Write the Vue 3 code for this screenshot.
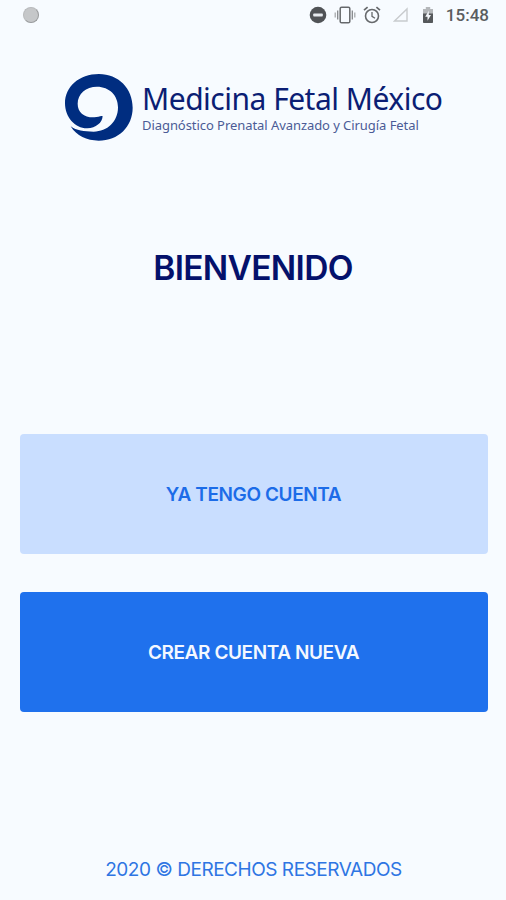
<template>
  <div class="screen">
    <header class="status-bar">
      <span class="dot"></span>
      <div class="status-icons">
        <svg class="icon-dnd" width="18" height="18" viewBox="0 0 18 18">
          <circle cx="9" cy="9" r="8.3" fill="#505356" />
          <rect x="4.2" y="7.4" width="9.6" height="3.2" rx="0.8" fill="#e6eaee" />
        </svg>
        <svg class="icon-vibrate" width="22" height="18" viewBox="0 0 22 18" fill="none" stroke="#66696c">
          <rect x="6.2" y="1.2" width="9.6" height="15.6" rx="1.4" stroke-width="1.5" />
          <path d="M3.7 4.5v9M18.3 4.5v9" stroke-width="1.3" stroke="#85888b" />
          <path d="M1.2 6.5v5M20.8 6.5v5" stroke-width="1.2" stroke="#a0a3a6" />
        </svg>
        <svg class="icon-alarm" width="18" height="18" viewBox="0 0 18 18" fill="none" stroke="#66696c">
          <circle cx="9" cy="10" r="6.5" stroke-width="1.6" />
          <path d="M9 6v4.3l3 1.9" stroke-width="1.3" />
          <path d="M1 4.2L4.6 1.1M17 4.2L13.4 1.1" stroke-width="1.7" />
        </svg>
        <svg class="icon-signal" width="16" height="16" viewBox="0 0 16 16">
          <path d="M1.5 14L14 2v12z" fill="none" stroke="#c8cbce" stroke-width="1.4" />
        </svg>
        <svg class="icon-battery" width="12" height="18" viewBox="0 0 12 18">
          <path d="M3.8 1h4.4v2H11v5H1V3h2.8z" fill="#b4b7ba" />
          <path d="M1 7.5h10v8.7q0 .8-.8.8H1.8q-.8 0-.8-.8z" fill="#55585b" />
          <path d="M6.8 4.7L3.2 10.8h2.3v4L9 8.9H6.8z" fill="#f3f6fa" />
        </svg>
      </div>
      <span class="time">15:48</span>
    </header>

    <div class="logo">
      <svg class="mark" width="70" height="70" viewBox="0 0 70 70">
        <path
          transform="translate(-8 -7) scale(0.33333)"
          fill="#002d80"
          d="M44 181C62 210 92 224 128 224C187 224 230 182 230 125C230 67 187 24 129 24C69 24 27 62 27 112C27 154 58 188 94 187C120 186 138 171 140 151C134 148 127 154 115 154C84 155 65 139 65 113C65 84 90 62 123 62C160 62 186 88 186 124C186 167 154 197 113 197C84 197 61 194 44 181Z"
        />
      </svg>
      <div class="wordmark">
        <div class="brand">Medicina Fetal México</div>
        <div class="tagline">Diagnóstico Prenatal Avanzado y Cirugía Fetal</div>
      </div>
    </div>

    <h1 class="title">BIENVENIDO</h1>

    <div class="actions">
      <button class="btn btn-light" type="button">YA TENGO CUENTA</button>
      <button class="btn btn-primary" type="button">CREAR CUENTA NUEVA</button>
    </div>

    <footer class="footer">2020 © DERECHOS RESERVADOS</footer>
  </div>
</template>

<script setup>
</script>

<style>
body {
  background: #f7fbff;
}
</style>

<style scoped>
.screen {
  box-sizing: border-box;
  display: flex;
  flex-direction: column;
  width: 506px;
  height: 900px;
  overflow: hidden;
  background: #f7fbff;
  font-family: Inter, "Liberation Sans", sans-serif;
}

.status-bar {
  display: flex;
  align-items: center;
  height: 30px;
  padding: 0 17px 0 23px;
}

.dot {
  box-sizing: border-box;
  width: 16px;
  height: 16px;
  border: 1px solid #b8babc;
  border-right-color: #989a9c;
  border-bottom-color: #989a9c;
  border-radius: 50%;
  background: #c5c7c9;
}

.status-icons {
  display: flex;
  align-items: center;
  margin-left: auto;
}

.icon-vibrate,
.icon-alarm {
  margin-left: 7px;
}

.icon-signal {
  margin-left: 12px;
}

.icon-battery {
  margin-left: 13px;
}

.time {
  margin-left: 12px;
  color: #5a5d60;
  font-family: Roboto, sans-serif;
  font-size: 17px;
  font-weight: 500;
  line-height: 20px;
}

.logo {
  display: flex;
  height: 70px;
  margin: 43px 0 0 64px;
}

.mark {
  flex: none;
}

.wordmark {
  padding-top: 9px;
  margin-left: 8px;
  font-family: "Noto Sans", "Open Sans", sans-serif;
  white-space: nowrap;
}

.brand {
  color: #0b1e74;
  font-size: 30px;
  line-height: 34px;
  letter-spacing: -0.5px;
}

.tagline {
  color: #4b5b96;
  font-size: 13px;
  line-height: 18px;
  letter-spacing: -0.06px;
}

.title {
  margin: 105px 0 0;
  color: #04116b;
  font-size: 33.5px;
  font-weight: 600;
  line-height: 40px;
  letter-spacing: -0.7px;
  text-align: center;
}

.actions {
  display: flex;
  flex-direction: column;
  gap: 38px;
  margin: 146px 18px 0 20px;
}

.btn {
  height: 120px;
  padding: 2px 1px 0 0;
  border: 0;
  border-radius: 4px;
  font-family: inherit;
  font-size: 19px;
  font-weight: 600;
  line-height: 24px;
  letter-spacing: -0.4px;
}

.btn-light {
  background: #c9deff;
  color: #1c6ce8;
}

.btn-primary {
  background: #1f71ed;
  color: #f4f8ff;
}

.footer {
  margin-top: 145px;
  padding-left: 1px;
  color: #2e75e3;
  font-size: 19px;
  line-height: 26px;
  letter-spacing: -0.46px;
  text-align: center;
}
</style>
